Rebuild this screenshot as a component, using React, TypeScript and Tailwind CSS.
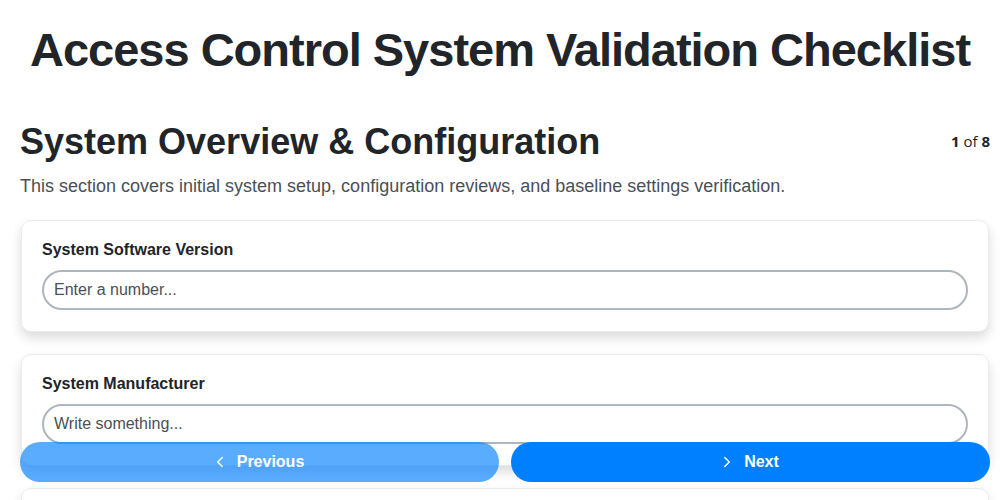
import React, { useState } from "react";
import { ChevronLeft, ChevronRight } from "lucide-react";

const fields = [
  { label: "System Software Version", placeholder: "Enter a number...", type: "number" },
  { label: "System Manufacturer", placeholder: "Write something...", type: "text" },
  { label: "Controller Model Number", placeholder: "Write something...", type: "text" },
];

const App = () => {
  const [values, setValues] = useState({});
  const step = 1;
  const total = 8;

  return (
    <div className="min-h-screen bg-white pb-[80px] font-['Liberation_Sans',Arial,sans-serif] text-[#212529]">
      {/* Page title */}
      <h1 className="pt-[22px] text-center text-[47px] font-bold leading-[56px] tracking-[-1px]">
        Access Control System Validation Checklist
      </h1>

      <main className="pl-5 pr-[10px] pt-[42px]">
        <div className="flex items-start justify-between">
          <h2 className="text-[36px] font-bold leading-[44px]">
            System Overview &amp; Configuration
          </h2>
          <div className="mt-[10px] font-['Open_Sans',sans-serif] text-[15px]">
            <b>{step}</b> of <b>{total}</b>
          </div>
        </div>
        <p className="mt-[10px] text-[18px] leading-6 text-[#495057]">
          This section covers initial system setup, configuration reviews, and
          baseline settings verification.
        </p>

        <div className="mt-[22px] flex flex-col gap-[22px]">
          {fields.map((f, i) => (
            <div
              key={i}
              className="mx-px rounded-[10px] border border-[#e9ecef] bg-white px-5 pb-[21px] pt-[19px] shadow-[0_6px_12px_rgba(0,0,0,0.14)]"
            >
              <label className="mb-[10px] block text-[16px] font-bold leading-5">
                {f.label}
              </label>
              <input
                type={f.type}
                placeholder={f.placeholder}
                value={values[i] || ""}
                onChange={(e) => setValues({ ...values, [i]: e.target.value })}
                className="h-10 w-full rounded-full border-2 border-[#adb5bd] bg-white px-[10px] text-[16px] text-[#212529] outline-none placeholder:text-[#495057]"
              />
            </div>
          ))}
        </div>
      </main>

      {/* Footer navigation */}
      <div className="fixed bottom-[18px] left-5 right-[10px] flex gap-3">
        <button
          disabled
          className="flex h-10 flex-1 items-center justify-center gap-2 rounded-full bg-[#0080ff] text-[16px] font-bold text-white opacity-65"
        >
          <ChevronLeft size={18} strokeWidth={2} className="-ml-1" />
          Previous
        </button>
        <button className="flex h-10 flex-1 items-center justify-center gap-2 rounded-full bg-[#0080ff] text-[16px] font-bold text-white">
          <ChevronRight size={18} strokeWidth={2} className="-ml-1" />
          Next
        </button>
      </div>
    </div>
  );
};

export default App;
